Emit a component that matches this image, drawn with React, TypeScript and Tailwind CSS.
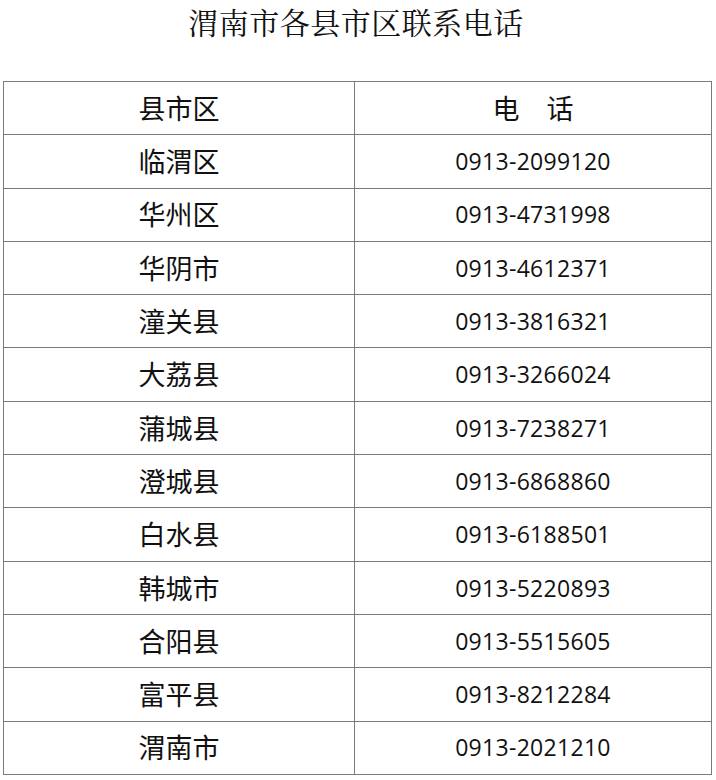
const rows: [string, string][] = [
  ['临渭区', '0913-2099120'],
  ['华州区', '0913-4731998'],
  ['华阴市', '0913-4612371'],
  ['潼关县', '0913-3816321'],
  ['大荔县', '0913-3266024'],
  ['蒲城县', '0913-7238271'],
  ['澄城县', '0913-6868860'],
  ['白水县', '0913-6188501'],
  ['韩城市', '0913-5220893'],
  ['合阳县', '0913-5515605'],
  ['富平县', '0913-8212284'],
  ['渭南市', '0913-2021210'],
];

const cjk = "font-['Noto_Sans_CJK_SC',sans-serif]";
const num = "font-['Open_Sans','Noto_Sans',sans-serif]";

export default function App() {
  return (
    <div className="w-[716px] h-[780px] bg-white text-[#111] overflow-hidden">
      {/* TITLE */}
      <h1 className="h-[42px] flex items-center justify-center text-[30px] leading-none font-['Noto_Serif_CJK_SC','Noto_Sans_CJK_SC',serif] font-normal tracking-[0.5px] pr-[4px]">
        渭南市各县市区联系电话
      </h1>

      <div className="pt-[39px] pl-[3px] pr-[4px]">
        <table className="w-[709px] border-collapse table-fixed">
          <colgroup>
            <col className="w-[351px]" />
            <col />
          </colgroup>
          <thead>
            <tr className="h-[53.3px]">
              <th className={`border border-[#7a7a7a] text-[27px] font-normal ${cjk}`}>县市区</th>
              <th className={`border border-[#7a7a7a] text-[27px] font-normal ${cjk}`}>电　话</th>
            </tr>
          </thead>
          <tbody>
            {rows.map(([name, phone]) => (
              <tr key={name} className="h-[53.3px]">
                <td className={`border border-[#7a7a7a] text-center text-[27px] ${cjk}`}>{name}</td>
                <td className={`border border-[#7a7a7a] text-center text-[23px] tracking-[0.3px] ${num}`}>{phone}</td>
              </tr>
            ))}
          </tbody>
        </table>
      </div>
    </div>
  );
}
